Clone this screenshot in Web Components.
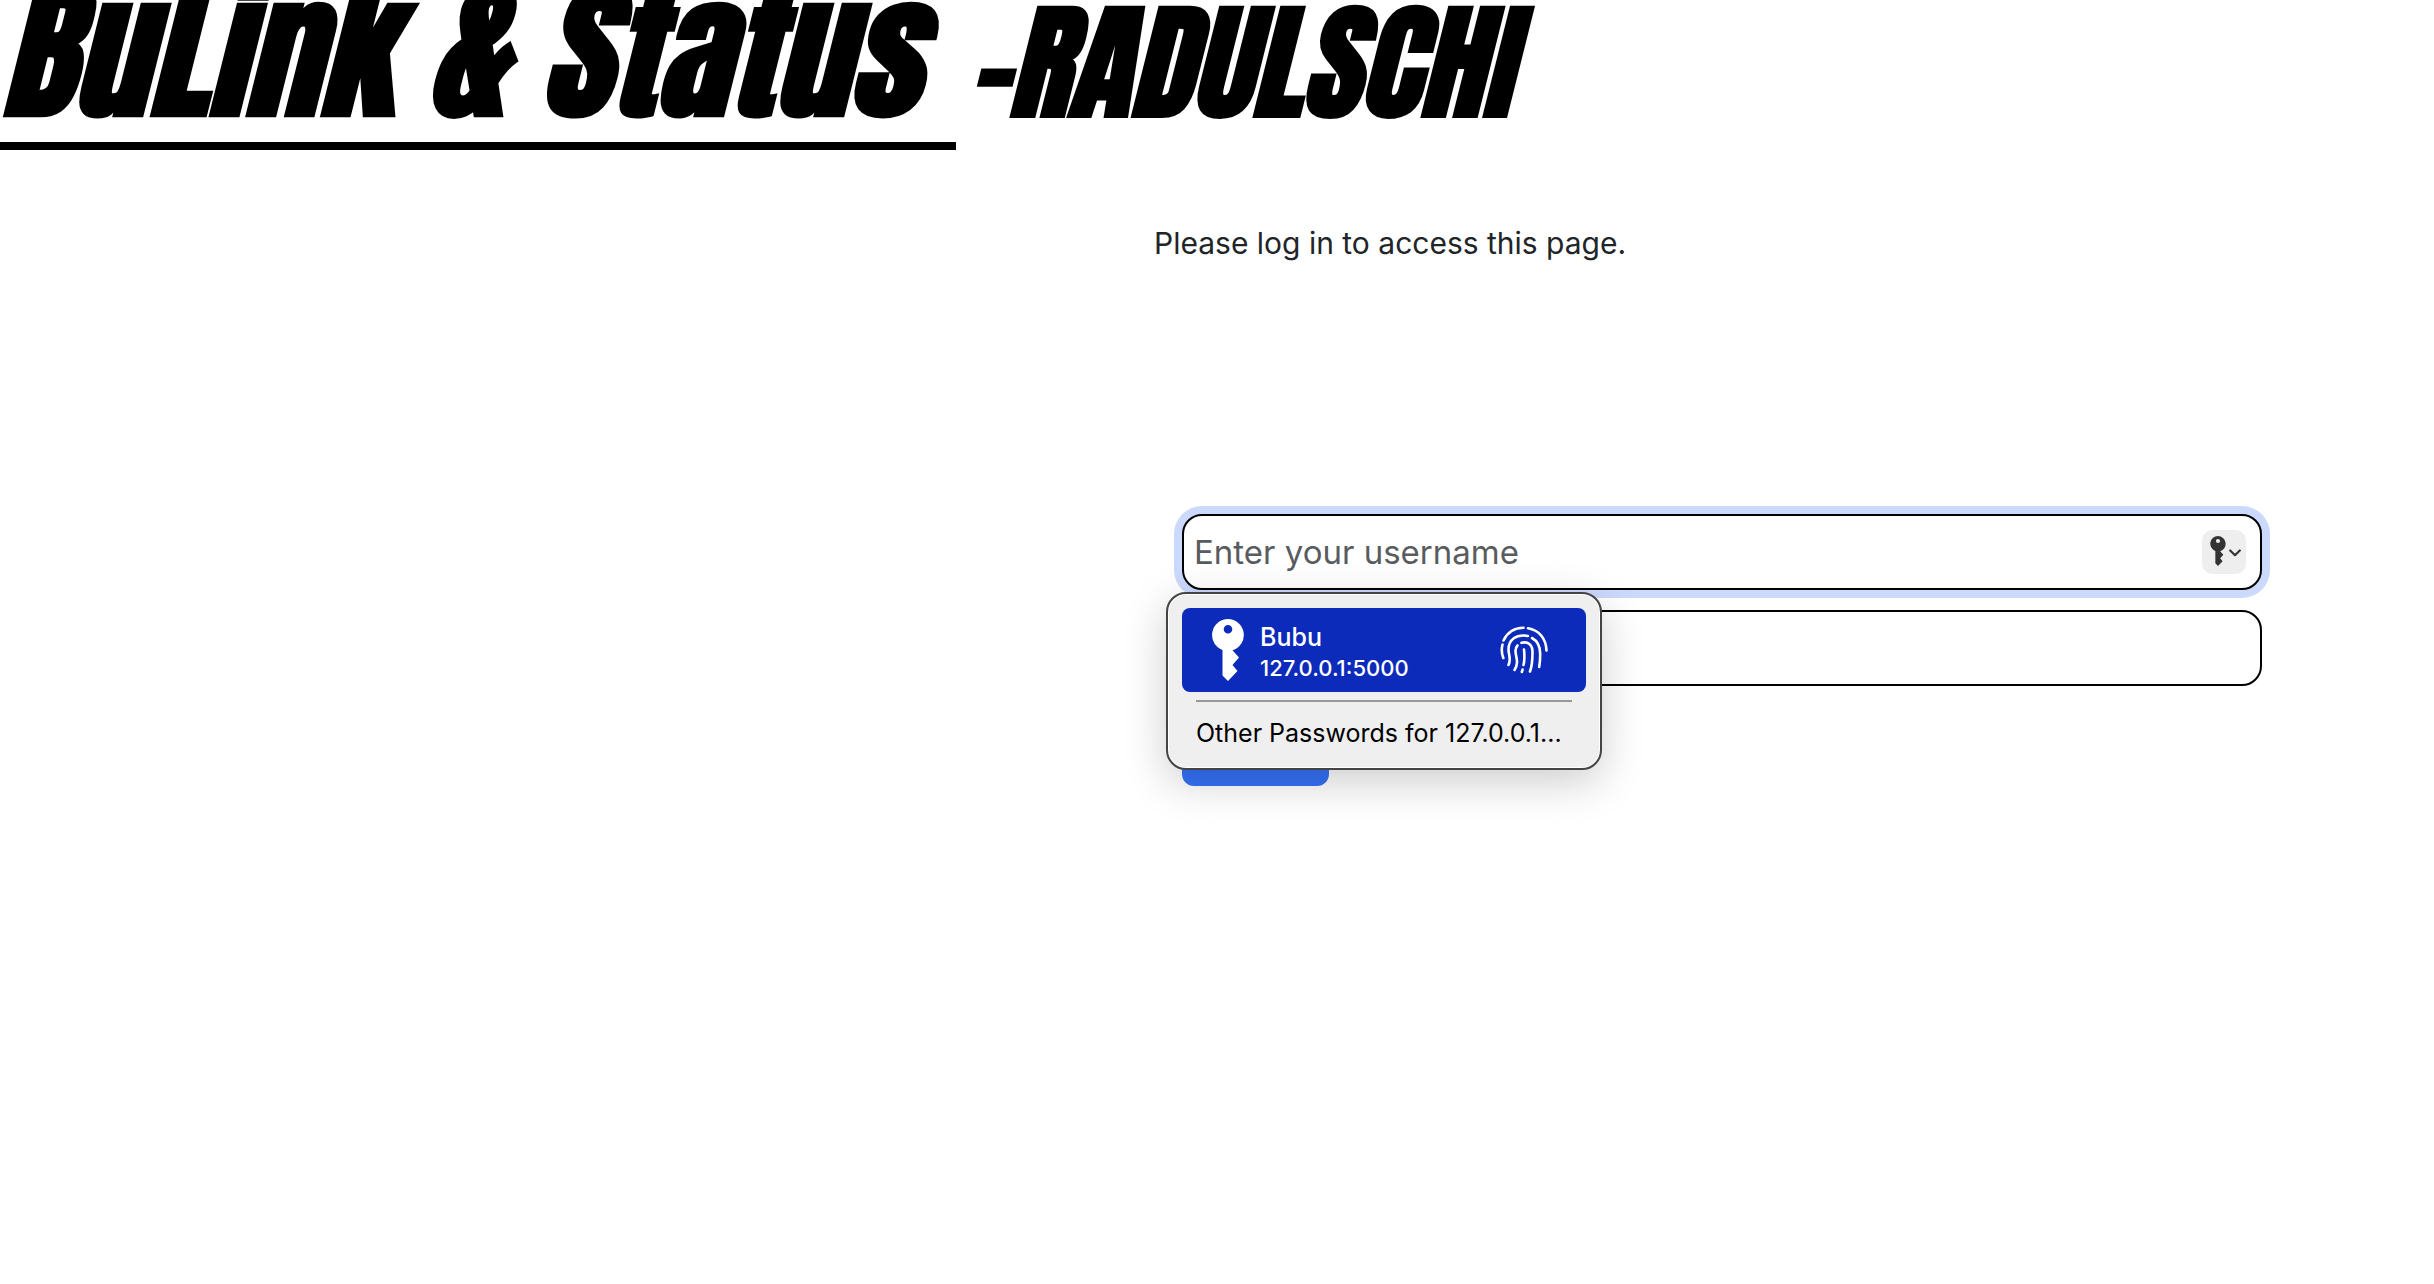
<!DOCTYPE html>
<html lang="en">
<head>
<meta charset="utf-8">
<title>BuLink &amp; Status</title>
<style>
  body { margin: 0; background: #fff; color: #212529; font-family: Inter, "Liberation Sans", sans-serif; }
</style>
</head>
<body>
<login-page></login-page>
<script>
const define = (name, html, setup) => {
  const template = document.createElement('template');
  template.innerHTML = html;
  customElements.define(name, class extends HTMLElement {
    constructor() {
      super();
      this.attachShadow({ mode: 'open' }).append(template.content.cloneNode(true));
      if (setup) setup(this.shadowRoot, this);
    }
  });
};

define('key-icon', `
  <style>
    :host { display: block; flex: none; }
    svg { display: block; width: 100%; height: 100%; }
  </style>
  <svg viewBox="0 0 32 62" fill="currentColor" aria-hidden="true">
    <path fill-rule="evenodd" d="M16 0a16 16 0 0 1 4.500 31.300L27 38.500 20.500 46 25.500 52 16 62 10.500 56.500V31A16 16 0 0 1 16 0zm0 6a4.300 4.300 0 1 0 0 8.600 4.300 4.300 0 0 0 0-8.600z"/>
  </svg>`);

define('fingerprint-icon', `
  <style>
    :host { display: block; flex: none; width: 48px; height: 48px; }
    svg { display: block; }
  </style>
  <svg width="48" height="48" viewBox="0 0 48 48" fill="none" stroke="currentColor" stroke-width="2.600" stroke-linecap="round" aria-hidden="true">
    <path d="M3.500 14.500C7 7 14 2 23.500 1.800"/>
    <path d="M28 2.200C39 4 46 12.500 46.500 24.500"/>
    <path d="M2.500 18.500C1.300 23 1.600 27.500 3.300 32"/>
    <path d="M8.500 39C11.500 33 8.500 29 8.500 23.500C8.500 14 16 7.500 28 10"/>
    <path d="M32 12C38.500 15.500 40.200 21 40.200 28C40.200 33 40 37 39.200 41"/>
    <path d="M14.500 44C19.500 36 15.500 31 15.500 25C15.500 22.500 16.200 20.800 17.500 19.500"/>
    <path d="M21.500 16.800C28 15 32.500 19 32.500 26C32.500 33 32.500 39 30 45.500"/>
    <path d="M24 23.500C24.500 29 25 34 23.500 39"/>
    <path d="M22.600 43.500L21.800 46"/>
  </svg>`);

define('brand-heading', `
  <style>
    :host { display: block; color: #000; font-family: Impact, Anton, "Roboto Condensed", sans-serif; }
    h1 { display: flex; align-items: flex-start; margin: 0; font-weight: 700; font-style: italic; white-space: nowrap; }
    .name { font-size: 150px; line-height: 104px; padding: 0 37px 38px 0; border-bottom: 8px solid #000; }
    .user { font-size: 126px; line-height: 126px; margin-left: 12px; }
  </style>
  <h1><span class="name"><slot></slot></span><span class="user"><slot name="user"></slot></span></h1>`);

define('password-menu', `
  <style>
    :host { display: block; box-sizing: border-box; width: 436px; padding: 14px; border: 2px solid #444; border-radius: 20px;
      background: #efefef; box-shadow: inset 0 0 0 1px #fff, 0 12px 44px rgba(0,0,0,.2); color: #000; }
    button { font: inherit; color: inherit; background: none; border: 0; text-align: left; display: flex; align-items: center; box-sizing: border-box; width: 100%; }
    .entry { height: 84px; padding: 0 38px 0 30px; gap: 16px; border-radius: 8px; background: #0d2bba; color: #fff; font-weight: 500; }
    key-icon { width: 32px; height: 62px; }
    .text { flex: 1; display: flex; flex-direction: column; padding-top: 4px; }
    .title { font-size: 25px; line-height: 32px; }
    .host { font-size: 22px; line-height: 30px; }
    hr { margin: 8px 14px; border: 0; height: 2px; background: #999; }
    .other { padding: 2px 14px 0; height: 44px; font-size: 25px; white-space: nowrap; }
  </style>
  <button type="button" class="entry">
    <key-icon></key-icon>
    <span class="text"><span class="title">Bubu</span><span class="host">127.0.0.1:5000</span></span>
    <fingerprint-icon></fingerprint-icon>
  </button>
  <hr>
  <button type="button" class="other">Other Passwords for 127.0.0.1...</button>`);

define('text-field', `
  <style>
    :host { display: block; position: relative; }
    input { display: block; box-sizing: border-box; width: 100%; height: 76px; padding: 0 80px 0 10px; border: 2px solid #000; border-radius: 20px;
      background: #fff; font: inherit; font-size: 33px; color: #212529; outline: 0; }
    input::placeholder { color: #595c5f; opacity: 1; }
    :host([active]) input { box-shadow: 0 0 0 8px #cbd9fd; }
    ::slotted(*) { position: absolute; z-index: 1; }
    ::slotted(autofill-button) { top: 16px; right: 16px; }
    ::slotted(password-menu) { top: calc(100% + 2px); left: -16px; }
  </style>
  <input>
  <slot></slot>`, (root, host) => {
  const input = root.querySelector('input');
  input.type = host.getAttribute('type') || 'text';
  input.placeholder = host.getAttribute('placeholder') || '';
  input.setAttribute('aria-label', host.getAttribute('label'));
});

define('autofill-button', `
  <style>
    :host { display: block; }
    button { display: flex; align-items: center; justify-content: center; gap: 3px; width: 44px; height: 44px; padding: 0 0 2px 2px; border: 0; border-radius: 10px; background: #eee; color: #333; }
    key-icon { width: 16px; height: 30px; }
    svg { margin-top: 4px; }
  </style>
  <button type="button" aria-label="AutoFill password">
    <key-icon></key-icon>
    <svg width="12" height="8" viewBox="0 0 12 8" fill="none" stroke="currentColor" stroke-width="2.200" stroke-linecap="round" stroke-linejoin="round"><path d="M1.200 1.500L6 6.200L10.800 1.500"/></svg>
  </button>`);

define('login-form', `
  <style>
    :host { display: block; }
    form { display: flex; flex-direction: column; align-items: flex-start; gap: 20px; margin: 0; }
    text-field { width: 100%; }
    text-field[active] { z-index: 1; }
    .submit { width: 147px; height: 80px; border: 0; border-radius: 12px; background: #3572f8; }
  </style>
  <form>
    <text-field active label="Username" placeholder="Enter your username">
      <autofill-button></autofill-button>
      <password-menu></password-menu>
    </text-field>
    <text-field type="password" label="Password"></text-field>
    <button type="button" class="submit" aria-label="Log in"></button>
  </form>`);

define('login-page', `
  <style>
    :host { display: block; overflow: hidden; min-height: 100vh; }
    main { display: grid; grid-template-columns: 1154fr 1280fr; padding-top: 69px; }
    section { grid-column: 2; }
    p { margin: 0; font-size: 30px; line-height: 48px; }
    login-form { margin: 247px 172px 0 28px; }
  </style>
  <brand-heading>BuLink &amp; Status<span slot="user">-RADULSCHI</span></brand-heading>
  <main>
    <section>
      <p>Please log in to access this page.</p>
      <login-form></login-form>
    </section>
  </main>`);
</script>
</body>
</html>
